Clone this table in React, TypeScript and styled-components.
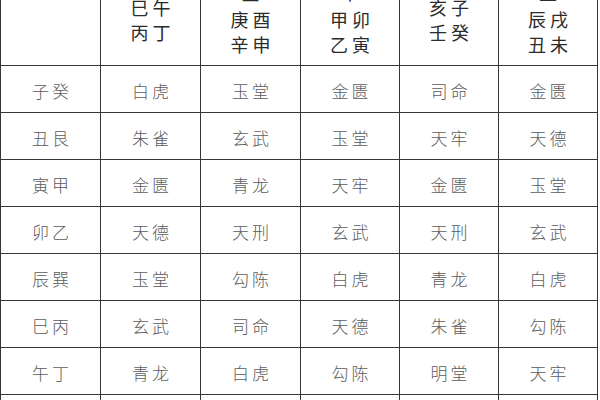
import React from "react";
import styled, { createGlobalStyle } from "styled-components";

const Global = createGlobalStyle`
  html, body { margin: 0; padding: 0; background: #ffffff; overflow: hidden; }
  body { font-family: "Noto Sans CJK SC", "Noto Sans", sans-serif; }
`;

const Page = styled.div`
  width: 600px;
  height: 400px;
  overflow: hidden;
  background: #fff;
`;

const Grid = styled.div`
  display: grid;
  grid-template-columns: 100px 100px 100px 99px 99px 99px;
  grid-auto-rows: 47px;
  width: max-content;
  border-left: 1px solid #363636;
`;

const HeaderGrid = styled(Grid)`
  grid-auto-rows: 91px;
  margin-top: -25px;
`;

const BodyGrid = styled(Grid)``;

const Cell = styled.div<{ $head?: boolean }>`
  box-sizing: border-box;
  border-right: 1px solid #363636;
  border-bottom: 1px solid #363636;
  display: flex;
  flex-direction: column;
  align-items: center;
  justify-content: center;
  color: ${(p) => (p.$head ? "#2b2b2b" : "#5c5c5c")};
  font-size: ${(p) => (p.$head ? "18px" : "17px")};
  font-weight: ${(p) => (p.$head ? 400 : 300)};
  letter-spacing: ${(p) => (p.$head ? "4px" : "3px")};
  line-height: ${(p) => (p.$head ? "25px" : "20px")};
  padding-left: ${(p) => (p.$head ? "4px" : "3px")};
  padding-top: ${(p) => (p.$head ? "0" : "3px")};
`;

const Line = styled.span<{ $top?: boolean }>`
  display: block;
  margin-top: ${(p) => (p.$top ? "-4px" : "0")};
  margin-bottom: ${(p) => (p.$top ? "2px" : "0")};
`;

const headers: string[][] = [
  [],
  ["巳午", "丙丁"],
  ["金", "庚酉", "辛申"],
  ["木", "甲卯", "乙寅"],
  ["亥子", "壬癸"],
  ["土", "辰戌", "丑未"],
];

const rows: string[][] = [
  ["子癸", "白虎", "玉堂", "金匮", "司命", "金匮"],
  ["丑艮", "朱雀", "玄武", "玉堂", "天牢", "天德"],
  ["寅甲", "金匮", "青龙", "天牢", "金匮", "玉堂"],
  ["卯乙", "天德", "天刑", "玄武", "天刑", "玄武"],
  ["辰巽", "玉堂", "勾陈", "白虎", "青龙", "白虎"],
  ["巳丙", "玄武", "司命", "天德", "朱雀", "勾陈"],
  ["午丁", "青龙", "白虎", "勾陈", "明堂", "天牢"],
  ["未坤", "天刑", "金匮", "青龙", "勾陈", "司命"],
];

export default function App() {
  return (
    <Page>
      <Global />
      <HeaderGrid>
        {headers.map((h, i) => (
          <Cell key={i} $head>
            {h.map((l, j) => (
              <Line key={j} $top={h.length === 3 && j === 0}>
                {l}
              </Line>
            ))}
          </Cell>
        ))}
      </HeaderGrid>
      <BodyGrid>
        {rows.map((r, i) =>
          r.map((c, j) => <Cell key={`${i}-${j}`}>{c}</Cell>)
        )}
      </BodyGrid>
    </Page>
  );
}
